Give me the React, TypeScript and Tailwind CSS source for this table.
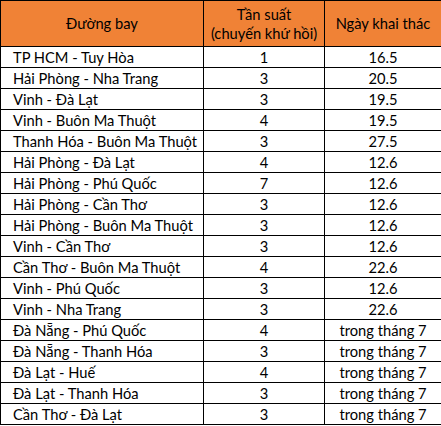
const rows: [string, string, string][] = [
  ["TP HCM - Tuy Hòa", "1", "16.5"],
  ["Hải Phòng - Nha Trang", "3", "20.5"],
  ["Vinh - Đà Lạt", "3", "19.5"],
  ["Vinh - Buôn Ma Thuột", "4", "19.5"],
  ["Thanh Hóa - Buôn Ma Thuột", "3", "27.5"],
  ["Hải Phòng - Đà Lạt", "4", "12.6"],
  ["Hải Phòng - Phú Quốc", "7", "12.6"],
  ["Hải Phòng - Cần Thơ", "3", "12.6"],
  ["Hải Phòng - Buôn Ma Thuột", "3", "12.6"],
  ["Vinh - Cần Thơ", "3", "12.6"],
  ["Cần Thơ - Buôn Ma Thuột", "4", "22.6"],
  ["Vinh - Phú Quốc", "3", "12.6"],
  ["Vinh - Nha Trang", "3", "22.6"],
  ["Đà Nẵng - Phú Quốc", "4", "trong tháng 7"],
  ["Đà Nẵng - Thanh Hóa", "3", "trong tháng 7"],
  ["Đà Lạt - Huế", "4", "trong tháng 7"],
  ["Đà Lạt - Thanh Hóa", "3", "trong tháng 7"],
  ["Cần Thơ - Đà Lạt", "3", "trong tháng 7"],
];

export default function App() {
  return (
    <div className="w-[441px] h-[426px] bg-white font-['Lato',sans-serif] text-[14.7px] text-black">
      <table className="w-[441px] border-collapse table-fixed">
        <colgroup>
          <col className="w-[203px]" />
          <col className="w-[121px]" />
          <col className="w-[117px]" />
        </colgroup>
        <thead>
          <tr className="h-[46px] bg-[#f08236]">
            <th className="border border-black font-normal text-center">Đường bay</th>
            <th className="border border-black font-normal text-center leading-[19px]">
              Tần suất
              <br />
              <span className="whitespace-nowrap">(chuyến khứ hồi)</span>
            </th>
            <th className="border border-black font-normal text-center">Ngày khai thác</th>
          </tr>
        </thead>
        <tbody>
          {rows.map(([route, freq, date]) => (
            <tr key={route} className="h-[21px]">
              <td className="border border-black pl-3 leading-[20px] whitespace-nowrap">{route}</td>
              <td className="border border-black text-center leading-[20px]">{freq}</td>
              <td className="border border-black text-center leading-[20px]">{date}</td>
            </tr>
          ))}
        </tbody>
      </table>
    </div>
  );
}
